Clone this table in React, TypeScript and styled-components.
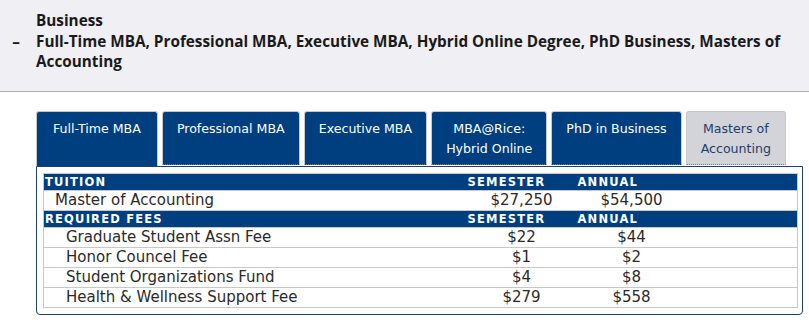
import React from 'react';
import styled, { createGlobalStyle } from 'styled-components';

const GlobalStyle = createGlobalStyle`
  body {
    margin: 0;
    background: #ffffff;
    font-family: "DejaVu Sans", Verdana, sans-serif;
  }
`;

const Page = styled.div`
  width: 809px;
  height: 320px;
  overflow: hidden;
`;

const Header = styled.div`
  display: flex;
  background: #efeff4;
  border-bottom: 1px solid #ababab;
  padding: 10px 0 19px 0;
  font-family: "Open Sans", "Noto Sans", sans-serif;
  font-weight: 700;
  font-size: 15.3px;
  line-height: 20.5px;
  color: #1a1a1a;
`;

const Toggle = styled.div`
  width: 36px;
  flex: none;
  display: flex;
  flex-direction: column;
  align-items: center;
`;

const ToggleDash = styled.span`
  margin-top: 20.5px;
  margin-right: 4px;
`;

const HeaderText = styled.div`
  flex: 1;
  padding-right: 10px;
`;

const Content = styled.div`
  padding: 19px 6px 0 36px;
`;

const Tabs = styled.div`
  display: flex;
  gap: 4px;
  align-items: flex-start;
`;

const Tab = styled.div<{ $active?: boolean; $first?: boolean }>`
  box-sizing: border-box;
  height: ${(p) => (p.$first ? '55px' : '54px')};
  padding: 7px ${(p) => (p.$first ? '16px' : '14px')} 0;
  border: 1px solid #c9c9cc;
  border-bottom: ${(p) => (p.$first ? 'none' : '1px dotted #7a7a7a')};
  border-radius: 3px 3px 0 0;
  background: ${(p) => (p.$active ? '#d3d4d9' : '#003f7f')};
  color: ${(p) => (p.$active ? '#1f3d6b' : '#ffffff')};
  font-size: 12.6px;
  line-height: 20px;
  text-align: center;
  white-space: pre-line;
`;

const Panel = styled.div`
  border: 1px solid #1f3f6e;
  border-radius: 0 0 4px 4px;
  padding: 6px 4px 6px 6px;
`;

const FeeTable = styled.table`
  width: 100%;
  border-collapse: collapse;
  border: 1px solid #c8c8c8;
  table-layout: fixed;
  color: #2a2a2a;
`;

const SectionRow = styled.tr`
  background: #003f7f;
  color: #ffffff;
`;

const SectionCell = styled.th`
  font-size: 11.5px;
  font-weight: 700;
  letter-spacing: 1.2px;
  text-align: left;
  padding: 0 0 0 1px;
  height: 16px;
  line-height: 16px;
  border-bottom: 1px solid #c8c8c8;
`;

const Row = styled.tr`
  border-bottom: 1px solid #c8c8c8;
`;

const LabelCell = styled.td<{ $indent: number }>`
  font-size: 15px;
  height: 19px;
  line-height: 19px;
  padding: 0 0 0 ${(p) => p.$indent}px;
  white-space: nowrap;
`;

const AmountCell = styled.td`
  font-size: 15px;
  line-height: 19px;
  text-align: center;
  padding: 0;
`;

const tabs = [
  'Full-Time MBA',
  'Professional MBA',
  'Executive MBA',
  'MBA@Rice:\nHybrid Online',
  'PhD in Business',
  'Masters of\nAccounting',
];

const tuition = [{ name: 'Master of Accounting', semester: '$27,250', annual: '$54,500' }];

const fees = [
  { name: 'Graduate Student Assn Fee', semester: '$22', annual: '$44' },
  { name: 'Honor Councel Fee', semester: '$1', annual: '$2' },
  { name: 'Student Organizations Fund', semester: '$4', annual: '$8' },
  { name: 'Health & Wellness Support Fee', semester: '$279', annual: '$558' },
];

function Section({ title, rows, indent }: { title: string; rows: typeof fees; indent: number }) {
  return (
    <>
      <SectionRow>
        <SectionCell>{title}</SectionCell>
        <SectionCell>SEMESTER</SectionCell>
        <SectionCell>ANNUAL</SectionCell>
        <SectionCell />
      </SectionRow>
      {rows.map((r) => (
        <Row key={r.name}>
          <LabelCell $indent={indent}>{r.name}</LabelCell>
          <AmountCell>{r.semester}</AmountCell>
          <AmountCell>{r.annual}</AmountCell>
          <AmountCell />
        </Row>
      ))}
    </>
  );
}

function App() {
  return (
    <Page>
      <GlobalStyle />
      <Header>
        <Toggle>
          <ToggleDash>–</ToggleDash>
        </Toggle>
        <HeaderText>
          Business
          <br />
          Full-Time MBA, Professional MBA, Executive MBA, Hybrid Online Degree, PhD Business, Masters of
          Accounting
        </HeaderText>
      </Header>
      <Content>
        <Tabs>
          {tabs.map((t, i) => (
            <Tab key={t} $first={i === 0} $active={i === tabs.length - 1}>
              {t}
            </Tab>
          ))}
        </Tabs>
        <Panel>
          <FeeTable>
            <colgroup>
              <col style={{ width: 423 }} />
              <col style={{ width: 110 }} />
              <col style={{ width: 110 }} />
              <col />
            </colgroup>
            <tbody>
              <Section title="TUITION" rows={tuition} indent={11} />
              <Section title="REQUIRED FEES" rows={fees} indent={22} />
            </tbody>
          </FeeTable>
        </Panel>
      </Content>
    </Page>
  );
}

export default App;
